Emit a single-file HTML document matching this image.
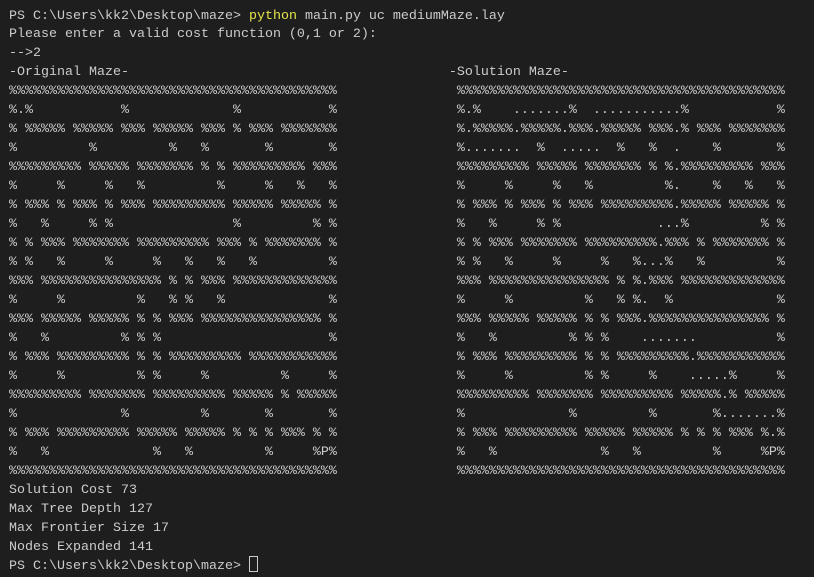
<!DOCTYPE html>
<html><head><meta charset="utf-8"><style>
html,body{margin:0;padding:0;background:#1e1e1e;width:814px;height:561px;overflow:hidden}
pre{position:absolute;left:9px;top:7.5px;margin:0;font-family:"Liberation Mono",monospace;font-size:13.33px;line-height:18.97px;color:#cccccc;white-space:pre}
.y{color:#e5e54a}
.cur{display:inline-block;width:7px;height:14px;border:1px solid #ccc;vertical-align:top;margin-top:-2px}
</style></head><body>
<pre>PS C:\Users\kk2\Desktop\maze&gt; <span class="y">python</span> main.py uc mediumMaze.lay
Please enter a valid cost function (0,1 or 2):
--&gt;2
-Original Maze-                                        -Solution Maze-
%%%%%%%%%%%%%%%%%%%%%%%%%%%%%%%%%%%%%%%%%               %%%%%%%%%%%%%%%%%%%%%%%%%%%%%%%%%%%%%%%%%
%.%           %             %           %               %.%    .......%  ...........%           %
% %%%%% %%%%% %%% %%%%% %%% % %%% %%%%%%%               %.%%%%%.%%%%%.%%%.%%%%% %%%.% %%% %%%%%%%
%         %         %   %       %       %               %.......  %  .....  %   %  .    %       %
%%%%%%%%% %%%%% %%%%%%% % % %%%%%%%%% %%%               %%%%%%%%% %%%%% %%%%%%% % %.%%%%%%%%% %%%
%     %     %   %         %     %   %   %               %     %     %   %         %.    %   %   %
% %%% % %%% % %%% %%%%%%%%% %%%%% %%%%% %               % %%% % %%% % %%% %%%%%%%%%.%%%%% %%%%% %
%   %     % %               %         % %               %   %     % %            ...%         % %
% % %%% %%%%%%% %%%%%%%%% %%% % %%%%%%% %               % % %%% %%%%%%% %%%%%%%%%.%%% % %%%%%%% %
% %   %     %     %   %   %   %         %               % %   %     %     %   %...%   %         %
%%% %%%%%%%%%%%%%%% % % %%% %%%%%%%%%%%%%               %%% %%%%%%%%%%%%%%% % %.%%% %%%%%%%%%%%%%
%     %         %   % %   %             %               %     %         %   % %.  %             %
%%% %%%%% %%%%% % % %%% %%%%%%%%%%%%%%% %               %%% %%%%% %%%%% % % %%%.%%%%%%%%%%%%%%% %
%   %         % % %                     %               %   %         % % %    .......          %
% %%% %%%%%%%%% % % %%%%%%%%% %%%%%%%%%%%               % %%% %%%%%%%%% % % %%%%%%%%%.%%%%%%%%%%%
%     %         % %     %         %     %               %     %         % %     %    .....%     %
%%%%%%%%% %%%%%%% %%%%%%%%% %%%%% % %%%%%               %%%%%%%%% %%%%%%% %%%%%%%%% %%%%%.% %%%%%
%             %         %       %       %               %             %         %       %.......%
% %%% %%%%%%%%% %%%%% %%%%% % % % %%% % %               % %%% %%%%%%%%% %%%%% %%%%% % % % %%% %.%
%   %             %   %         %     %P%               %   %             %   %         %     %P%
%%%%%%%%%%%%%%%%%%%%%%%%%%%%%%%%%%%%%%%%%               %%%%%%%%%%%%%%%%%%%%%%%%%%%%%%%%%%%%%%%%%
Solution Cost 73
Max Tree Depth 127
Max Frontier Size 17
Nodes Expanded 141
PS C:\Users\kk2\Desktop\maze&gt; <span class="cur"></span></pre>
</body></html>
